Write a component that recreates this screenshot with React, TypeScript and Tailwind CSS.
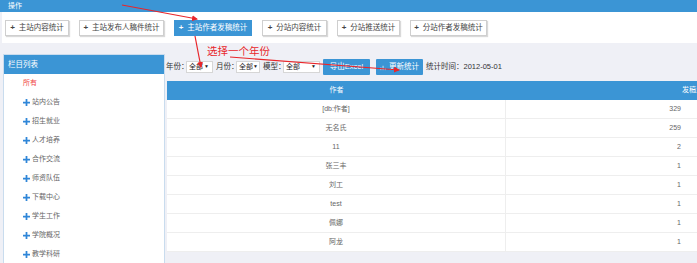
import React from "react";

const tabs = [
  { label: "主站内容统计", w: "w-[64px]" },
  { label: "主站发布人稿件统计", w: "w-[85px]" },
  { label: "主站作者发稿统计", w: "w-[78px]", active: true },
  { label: "分站内容统计", w: "w-[65px]" },
  { label: "分站推送统计", w: "w-[63px]" },
  { label: "分站作者发稿统计", w: "w-[77px]" },
];

const columns = ["站内公告", "招生就业", "人才培养", "合作交流", "师资队伍", "下载中心", "学生工作", "学院概况", "教学科研"];

const rows: [string, number][] = [
  ["[db:作者]", 329],
  ["无名氏", 259],
  ["11", 2],
  ["张三丰", 1],
  ["刘工", 1],
  ["test", 1],
  ["佩娜", 1],
  ["阿龙", 1],
];

const font = { fontFamily: "'Liberation Sans', 'Noto Sans CJK SC', sans-serif" };

function Select({ w }: { w: string }) {
  return (
    <div className={`${w} shrink-0 h-[12px] bg-white border border-[#d6d6d6] flex items-center justify-between pl-[2px] pr-[3px] text-[7px] text-[#222] whitespace-nowrap`}>
      <span>全部</span>
      <span className="text-[5px]">▼</span>
    </div>
  );
}

export default function App() {
  return (
    <div className="relative w-[697px] h-[263px] overflow-hidden bg-[#eff0f6]" style={font}>
      {/* top bar */}
      <div className="h-[12px] bg-[#3b95d5] text-white text-[7px] leading-[12px] pl-[8px]">操作</div>

      {/* tabs */}
      <div className="h-[31px] bg-white ml-[2px] flex items-center gap-[10px] pl-[3px]">
        {tabs.map((t) => (
          <div
            key={t.label}
            className={`${t.w} shrink-0 h-[16px] flex items-center justify-center gap-[4px] text-[7.5px] whitespace-nowrap ${
              t.active
                ? "bg-[#3b95d5] text-white"
                : "bg-white text-[#444] border border-[#cfcfcf] shadow-[1px_1px_1px_rgba(0,0,0,0.15)]"
            }`}
          >
            <span className="font-bold text-[8px]">+</span>
            <span>{t.label}</span>
          </div>
        ))}
      </div>

      <div className="flex">
        {/* sidebar */}
        <div className="shrink-0 ml-[3px] mt-[11px] w-[162px] bg-white border border-[#c9dcee] border-b-0">
          <div className="h-[19px] bg-[#3b95d5] text-white text-[7.5px] leading-[19px] pl-[4px]">栏目列表</div>
          <div className="h-[19px] flex items-center pl-[19px] text-[7px] text-[#f04343]">所有</div>
          {columns.map((c) => (
            <div key={c} className="h-[19px] flex items-center pl-[19px] gap-[2px] text-[7px] text-[#666]">
              <svg width="7" height="7" viewBox="0 0 8 8">
                <path d="M3 0h2v3h3v2H5v3H3V5H0V3h3z" fill="#2f86d8" />
              </svg>
              <span>{c}</span>
            </div>
          ))}
        </div>

        {/* main */}
        <div className="flex-1 min-w-0 overflow-hidden ml-[1px]">
          <div className="mt-[16px] h-[16px] flex items-center text-[7.5px] text-[#333] whitespace-nowrap">
            <span className="w-[20px] shrink-0">年份：</span>
            <Select w="w-[27px]" />
            <span className="w-[20px] shrink-0 ml-[3px]">月份：</span>
            <Select w="w-[24px]" />
            <span className="w-[20px] shrink-0 ml-[3px]">模型：</span>
            <Select w="w-[37px]" />
            <div className="shrink-0 ml-[3px] w-[47px] h-[16px] bg-[#3b95d5] rounded-[1px] text-white flex items-center justify-center">导出Excel</div>
            <div className="shrink-0 ml-[6px] w-[47px] h-[16px] bg-[#3b95d5] rounded-[1px] text-white flex items-center justify-center gap-[2px]">
              <svg width="7" height="7" viewBox="0 0 8 8" fill="none" stroke="#dbe9f6" strokeWidth="1">
                <path d="M1 7V4M3.5 7V2M6 7V5" />
              </svg>
              <span>更新统计</span>
            </div>
            <span className="ml-[3px]">统计时间：2012-05-01</span>
          </div>

          <div className="mt-[6px] ml-[1px] w-[700px] text-[7px]">
            <div className="h-[19px] bg-[#3b95d5] text-white flex items-center">
              <div className="w-[339px] shrink-0 text-center">作者</div>
              <div className="flex-1 pl-[176px]">发稿量</div>
            </div>
            {rows.map(([name, n]) => (
              <div key={name} className="h-[19px] bg-white flex items-center border-b border-[#eeeeee] text-[#666]">
                <div className="w-[339px] shrink-0 h-full flex items-center justify-center border-r border-[#eeeeee]">{name}</div>
                <div className="w-[175px] shrink-0 text-right">{n}</div>
              </div>
            ))}
          </div>
        </div>
      </div>

      {/* red annotations */}
      <svg className="absolute inset-0 pointer-events-none" width="697" height="263" viewBox="0 0 697 263">
        <defs>
          <marker id="ah" markerWidth="6" markerHeight="6" refX="5" refY="3" orient="auto" markerUnits="userSpaceOnUse">
            <path d="M0 0L6 3L0 6z" fill="#e8262b" />
          </marker>
        </defs>
        <line x1="122" y1="5" x2="197" y2="19" stroke="#e8262b" strokeWidth="1.2" markerEnd="url(#ah)" />
        <path d="M195 36 Q198 52 201 67" stroke="#e8262b" strokeWidth="1.2" fill="none" markerEnd="url(#ah)" />
        <line x1="230" y1="57" x2="399" y2="70" stroke="#e8262b" strokeWidth="1.2" markerEnd="url(#ah)" />
      </svg>
      <span className="absolute left-[207px] top-[43px] text-[10.5px] text-[#e8262b]" style={{ fontFamily: "'Noto Sans CJK SC', sans-serif" }}>
        选择一个年份
      </span>
    </div>
  );
}
